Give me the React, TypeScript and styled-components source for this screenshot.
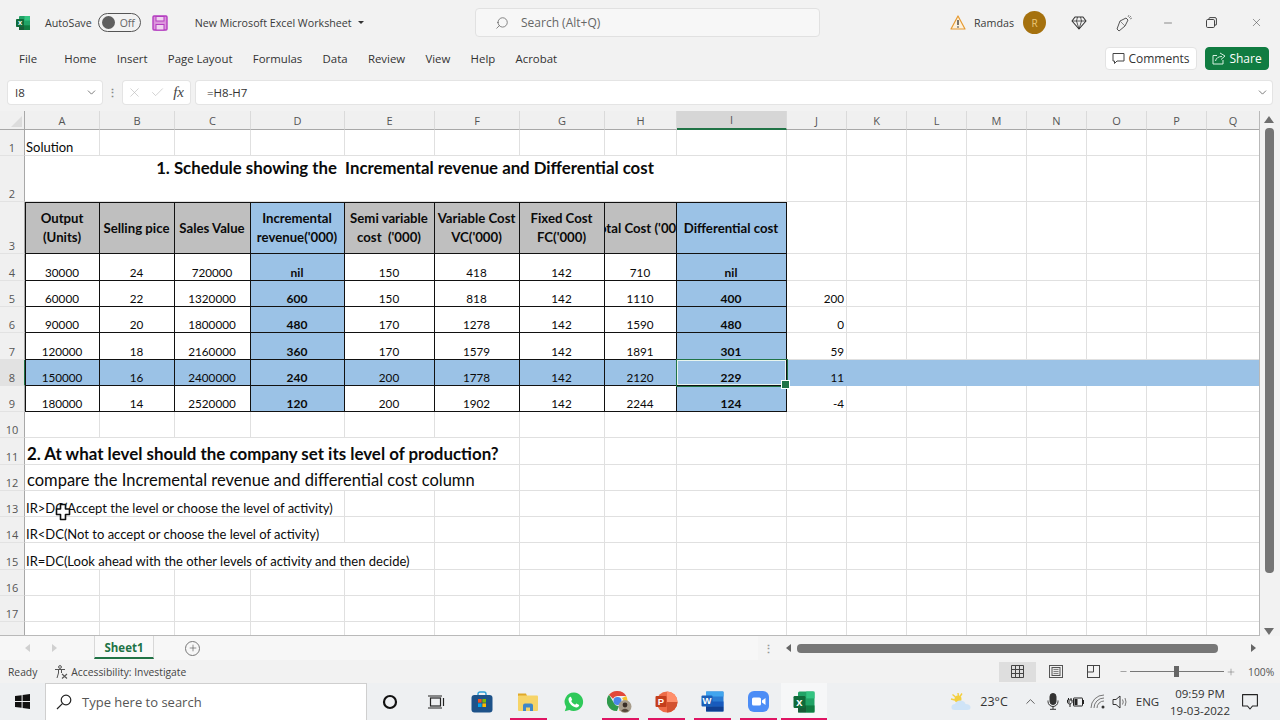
import React from 'react';
import styled, { createGlobalStyle } from 'styled-components';
import { Check, ChevronDown, ChevronUp, Minus, Plus, Search, X } from 'lucide-react';

const UI = `'Open Sans', 'Noto Sans', 'Liberation Sans', sans-serif`;
const SHEET = `Lato, 'Open Sans', 'Liberation Sans', sans-serif`;
const GREEN = '#217346';
const BLUE = '#9bc2e6';
const GRAY = '#bfbfbf';

const GlobalStyle = createGlobalStyle`
  html, body { margin: 0; padding: 0; background: #f3f3f3; }
  body { width: 1280px; height: 720px; overflow: hidden; font-family: ${UI}; color: #333; }
  * { box-sizing: border-box; }
`;

const Page = styled.div`
  width: 1280px;
  height: 720px;
  display: flex;
  flex-direction: column;
  background: #f2f2f2;
`;

/* title bar */
const TitleBar = styled.div`
  height: 45px;
  display: flex;
  align-items: center;
`;
const TitleLeft = styled.div`
  width: 475px;
  display: flex;
  align-items: center;
  padding-left: 15px;
`;
const TitleText = styled.span<{ $ml?: number }>`
  font-size: 10.7px;
  color: #3a3a3a;
  margin-left: ${({ $ml }) => $ml ?? 0}px;
  white-space: nowrap;
`;
const Toggle = styled.div`
  margin-left: 6px;
  width: 43px;
  height: 19px;
  border: 1px solid #555;
  border-radius: 10px;
  display: flex;
  align-items: center;
  padding-left: 3px;
  gap: 5px;
  font-size: 10.5px;
  color: #666;
`;
const ToggleKnob = styled.div`
  width: 13px;
  height: 13px;
  border-radius: 50%;
  background: #5f5f5f;
`;
const Caret = styled.div`
  margin-left: 6px;
  width: 0;
  height: 0;
  border-left: 3px solid transparent;
  border-right: 3px solid transparent;
  border-top: 3px solid #333;
`;
const SearchBox = styled.div`
  width: 345px;
  height: 29px;
  display: flex;
  align-items: center;
  gap: 12px;
  padding-left: 19px;
  background: #f7f7f7;
  border: 1px solid #e1e1e1;
  border-radius: 4px;
  font-size: 12px;
  color: #666;
`;
const TitleRight = styled.div`
  flex: 1;
  display: flex;
  align-items: center;
  padding-left: 130px;
`;
const Avatar = styled.div`
  margin-left: 9px;
  width: 23px;
  height: 23px;
  border-radius: 50%;
  background: #a5710e;
  color: #ecc878;
  font-size: 10px;
  display: flex;
  align-items: center;
  justify-content: center;
`;
const TitleIcon = styled.div<{ $ml: number }>`
  margin-left: ${({ $ml }) => $ml}px;
  display: flex;
  align-items: center;
  color: #444;
`;

/* menu bar */
const MenuBar = styled.div`
  height: 28px;
  display: flex;
  align-items: center;
  padding: 0 0 1px 19px;
  gap: 20.3px;
  font-size: 11.4px;
  color: #333;
`;
const MenuItem = styled.span<{ $first?: boolean }>`
  margin-right: ${({ $first }) => ($first ? 7 : 0)}px;
`;
const MenuActions = styled.div`
  margin-left: auto;
  padding-right: 11px;
  display: flex;
  gap: 8px;
`;
const CommentsButton = styled.div`
  width: 92px;
  height: 23px;
  background: #fff;
  border: 1px solid #e3e3e3;
  border-radius: 4px;
  display: flex;
  align-items: center;
  justify-content: center;
  gap: 3px;
  font-size: 12px;
  color: #333;
`;
const ShareButton = styled(CommentsButton)`
  width: 64px;
  background: #107c41;
  border-color: #107c41;
  color: #fff;
`;

/* formula bar */
const FormulaBar = styled.div`
  margin-top: 8px;
  height: 23px;
  display: flex;
  align-items: stretch;
  padding: 0 8px;
  font-size: 11.5px;
  color: #333;
`;
const FieldBox = styled.div`
  background: #fff;
  border-radius: 3px;
  box-shadow: 0 0 0 1px #e4e4e4;
  display: flex;
  align-items: center;
`;
const NameBox = styled(FieldBox)`
  width: 94px;
  padding: 0 4px 0 7px;
  justify-content: space-between;
`;
const Dots = styled.div`
  width: 21px;
  color: #888;
  display: flex;
  align-items: center;
  justify-content: center;
  font-size: 11px;
  font-weight: 700;
`;
const FxBox = styled(FieldBox)`
  width: 67px;
  padding: 0 4px;
  justify-content: space-between;
  color: #b8b8b8;
`;
const FxLabel = styled.span`
  font-family: 'Liberation Serif', serif;
  font-style: italic;
  font-size: 15px;
  color: #444;
  padding-right: 2px;
`;
const FormulaInput = styled(FieldBox)`
  flex: 1;
  margin-left: 6px;
  padding: 0 3px 0 11px;
  justify-content: space-between;
`;

/* sheet */
const SheetArea = styled.div`
  margin-top: 7px;
  height: 525px;
  display: flex;
`;
const Grid = styled.div`
  position: relative;
  width: 1260px;
  height: 525px;
  display: grid;
  grid-template-columns: 25px 75px 75px 76px 94px 90px 85px 85px 72px 110px 60px 60px 60px 60px 60px 60px 60px 53px;
  grid-template-rows: 19px 26px 46px 52px 27px 26px 26px 27px 26px 26px 26px 27px 26px 26px 26px 27px 26px 26px 14px;
  overflow: hidden;
  border-right: 1px solid #b9b9b9;
  border-bottom: 1px solid #b9b9b9;
  font-family: ${SHEET};
  background: #fff;
`;
const Corner = styled.div`
  background: #f0f0f0;
  border-right: 1px solid #a8a8a8;
  border-bottom: 1px solid #a8a8a8;
  position: relative;
  &::after {
    content: '';
    position: absolute;
    right: 2px;
    bottom: 2px;
    border-left: 11px solid transparent;
    border-bottom: 11px solid #dcdcdc;
  }
`;
const ColHead = styled.div<{ $active?: boolean }>`
  background: ${({ $active }) => ($active ? '#d6d6d6' : '#f0f0f0')};
  border-bottom: ${({ $active }) => ($active ? `2px solid ${GREEN}` : '1px solid #a8a8a8')};
  border-right: 1px solid #dadada;
  color: #555;
  font-family: ${UI};
  font-size: 11px;
  display: flex;
  align-items: center;
  justify-content: center;
`;
const RowHead = styled.div<{ $active?: boolean }>`
  background: ${({ $active }) => ($active ? '#e2e2e2' : '#f0f0f0')};
  border-right: ${({ $active }) => ($active ? `1px solid ${GREEN}` : '1px solid #a8a8a8')};
  border-bottom: 1px solid #e2e2e2;
  color: #555;
  font-family: ${UI};
  font-size: 11px;
  display: flex;
  align-items: flex-end;
  justify-content: center;
`;

type CellProps = {
  $span?: number;
  $align?: 'left' | 'center' | 'right';
  $valign?: 'start' | 'center' | 'end';
  $bold?: boolean;
  $size?: number;
  $fill?: string;
  $boxed?: boolean;
  $top?: boolean;
  $left?: boolean;
  $flat?: boolean;
  $selected?: boolean;
  $indent?: number;
  $lift?: number;
};
const alignMap = { left: 'flex-start', center: 'center', right: 'flex-end' };

const Cell = styled.div<CellProps>`
  position: relative;
  grid-column: span ${({ $span }) => $span ?? 1};
  display: flex;
  justify-content: ${({ $align }) => alignMap[$align ?? 'left']};
  align-items: ${({ $valign }) => ($valign === 'center' ? 'center' : $valign === 'start' ? 'flex-start' : 'flex-end')};
  padding: 0 2px ${({ $lift }) => $lift ?? 0}px;
  padding-left: ${({ $indent }) => $indent ?? 1}px;
  font-size: ${({ $size }) => $size ?? 11.7}px;
  font-weight: ${({ $bold }) => ($bold ? 700 : 400)};
  color: #0a0a0a;
  white-space: pre;
  overflow: hidden;
  background: ${({ $fill }) => $fill ?? '#fff'};
  border-right: 1px solid ${({ $boxed, $flat, $fill }) => ($boxed ? '#111' : $flat ? $fill : '#e0e0e0')};
  border-bottom: 1px solid ${({ $boxed, $flat, $fill }) => ($boxed ? '#111' : $flat ? $fill : '#e0e0e0')};
  ${({ $top }) => ($top ? 'border-top: 1px solid #111;' : '')}
  ${({ $left }) => ($left ? 'border-left: 1px solid #111;' : '')}
  ${({ $selected }) =>
    $selected
      ? `
    overflow: visible;
    z-index: 2;
    box-shadow: 0 0 0 1px ${GREEN}, inset 0 0 0 1px #e8f5ee;
    &::after {
      content: '';
      position: absolute;
      right: -4px;
      bottom: -4px;
      width: 7px;
      height: 7px;
      background: ${GREEN};
      border: 1px solid #fff;
    }
  `
      : ''}
`;
const HeadText = styled.div`
  text-align: center;
  line-height: 19px;
  flex-shrink: 0;
`;
const TitleCell = styled(Cell)`
  padding-top: 1px;
`;
const CellCursor = styled.svg`
  position: absolute;
  left: 55px;
  top: 392px;
  z-index: 3;
`;

/* vertical scroll */
const VScroll = styled.div`
  width: 20px;
  display: flex;
  flex-direction: column;
  align-items: center;
  padding: 5px 2px 1px 0;
`;
const ArrowUp = styled.div`
  border-left: 5px solid transparent;
  border-right: 5px solid transparent;
  border-bottom: 7px solid #6e6e6e;
`;
const ArrowDown = styled.div`
  margin-top: auto;
  border-left: 5px solid transparent;
  border-right: 5px solid transparent;
  border-top: 7px solid #6e6e6e;
`;
const VThumb = styled.div`
  margin-top: 5px;
  width: 9px;
  height: 445px;
  border-radius: 4px;
  background: #757575;
`;

/* tabs */
const TabBar = styled.div`
  height: 24px;
  display: flex;
  align-items: center;
  background: #f7f7f7;
`;
const TabNav = styled.div`
  width: 94px;
  display: flex;
  align-items: center;
  gap: 22px;
  padding-left: 25px;
`;
const NavLeft = styled.div<{ $color?: string }>`
  border-top: 4px solid transparent;
  border-bottom: 4px solid transparent;
  border-right: 5px solid ${({ $color }) => $color ?? '#d0d0d0'};
`;
const NavRight = styled.div<{ $color?: string }>`
  border-top: 4px solid transparent;
  border-bottom: 4px solid transparent;
  border-left: 5px solid ${({ $color }) => $color ?? '#d0d0d0'};
`;
const SheetTab = styled.div`
  width: 60px;
  height: 23px;
  align-self: flex-start;
  padding-top: 2px;
  background: #f9f9f9;
  border-bottom: 2px solid ${GREEN};
  border-left: 1px solid #d8d8d8;
  border-right: 1px solid #d8d8d8;
  color: ${GREEN};
  font-size: 11.5px;
  font-weight: 700;
  display: flex;
  align-items: center;
  justify-content: center;
`;
const AddSheet = styled.div`
  margin-left: 31px;
  width: 15px;
  height: 15px;
  border: 1.4px solid #777;
  border-radius: 50%;
  color: #555;
  display: flex;
  align-items: center;
  justify-content: center;
`;
const HScrollZone = styled.div`
  margin-left: auto;
  width: 522px;
  height: 24px;
  display: flex;
  align-items: center;
  background: #f4f4f4;
`;
const ZoneDots = styled.div`
  width: 20px;
  margin-right: 8px;
  color: #999;
  font-size: 11px;
  font-weight: 700;
  text-align: center;
`;
const HThumb = styled.div`
  margin: 0 33px 0 6px;
  width: 421px;
  height: 9px;
  border-radius: 4px;
  background: #777;
`;

/* status bar */
const StatusBar = styled.div`
  height: 23px;
  display: flex;
  align-items: center;
  padding-left: 8px;
  font-size: 10.3px;
  color: #444;
`;
const StatusAccess = styled.div`
  margin-left: 17px;
  display: flex;
  align-items: center;
  gap: 3px;
`;
const StatusRight = styled.div`
  margin-left: auto;
  display: flex;
  align-items: center;
  padding-right: 8px;
`;
const ViewButton = styled.div<{ $active?: boolean }>`
  width: 37px;
  height: 20px;
  margin-right: 1px;
  background: ${({ $active }) => ($active ? '#dedede' : 'transparent')};
  display: flex;
  align-items: center;
  justify-content: center;
  color: #555;
`;
const ZoomGroup = styled.div`
  margin-left: 6px;
  display: flex;
  align-items: center;
  color: #666;
`;
const SliderTrack = styled.div`
  position: relative;
  margin: 0 2px;
  width: 94px;
  height: 1px;
  background: #777;
`;
const SliderThumb = styled.div`
  position: absolute;
  left: 44px;
  top: -5px;
  width: 5px;
  height: 11px;
  background: #666;
`;
const ZoomValue = styled.span`
  margin-left: 12px;
  width: 24px;
  font-size: 10.3px;
  color: #555;
  white-space: nowrap;
`;

/* taskbar */
const Taskbar = styled.div`
  height: 37px;
  display: flex;
  align-items: stretch;
  background: #eef0f2;
`;
const StartButton = styled.div`
  width: 45px;
  display: flex;
  align-items: center;
  justify-content: center;
  padding-right: 1px;
`;
const TaskSearch = styled.div`
  width: 322px;
  background: #fff;
  border: 1px solid #cfcfcf;
  border-bottom: none;
  display: flex;
  align-items: center;
  gap: 10px;
  padding: 0 0 1px 10px;
  font-size: 13px;
  color: #555;
`;
const TaskSlot = styled.div<{ $run?: boolean; $active?: boolean }>`
  position: relative;
  width: 46px;
  display: flex;
  align-items: center;
  justify-content: center;
  background: ${({ $active }) => ($active ? '#f6f7f8' : 'transparent')};
  ${({ $run, $active }) =>
    $run
      ? `&::after {
    content: '';
    position: absolute;
    left: ${$active ? 0 : 5}px;
    right: ${$active ? 0 : 4}px;
    bottom: 0;
    height: 2px;
    background: #df1463;
  }`
      : ''}
`;
const Tray = styled.div`
  margin-left: auto;
  display: flex;
  align-items: center;
  padding-right: 15px;
  font-size: 12.5px;
  color: #333;
`;
const TrayItem = styled.div<{ $w: number; $pl?: number }>`
  width: ${({ $w }) => $w}px;
  padding-left: ${({ $pl }) => $pl ?? 0}px;
  display: flex;
  align-items: center;
  justify-content: center;
  white-space: nowrap;
`;
const EngLabel = styled(TrayItem)`
  font-size: 11.5px;
`;
const Clock = styled(TrayItem)`
  flex-direction: column;
  font-size: 11.5px;
  line-height: 17px;
`;

/* icons */
const ExcelIcon = ({ size = 16 }: { size?: number }) => (
  <svg width={size} height={size} viewBox="0 0 16 16">
    <rect x="4" y="1" width="11" height="14" rx="1" fill="#21a366" />
    <rect x="9.5" y="1" width="5.5" height="4.6" fill="#33c481" />
    <rect x="9.5" y="10.3" width="5.5" height="4.7" fill="#107c41" />
    <rect x="4" y="10.3" width="5.5" height="4.7" fill="#185c37" />
    <rect x="1" y="4" width="8" height="8" rx="0.8" fill="#0f6b3a" />
    <text x="5" y="10.4" fill="#fff" fontSize="7.5" fontWeight="700" textAnchor="middle" fontFamily="'Liberation Sans', sans-serif">
      x
    </text>
  </svg>
);

const SaveIcon = () => (
  <svg width="16" height="16" viewBox="0 0 16 16">
    <rect x="1" y="1" width="14" height="14" rx="1" fill="#dc96dc" stroke="#b43cc0" strokeWidth="1.4" />
    <rect x="4" y="1.5" width="8" height="4.5" fill="#f0d4f0" stroke="#b43cc0" />
    <rect x="4" y="9.5" width="8" height="5.5" fill="#f0d4f0" stroke="#b43cc0" />
  </svg>
);

const WarnIcon = () => (
  <svg width="16" height="15" viewBox="0 0 16 15">
    <path d="M8 1 L15 14 H1 Z" fill="#fdf1dc" stroke="#e69a32" strokeWidth="1.2" strokeLinejoin="round" />
    <path d="M8 5 V10" stroke="#333" strokeWidth="1.3" />
    <circle cx="8" cy="12" r="0.8" fill="#333" />
  </svg>
);

const DiamondIcon = () => (
  <svg width="16" height="14" viewBox="0 0 16 14" fill="none" stroke="#333" strokeWidth="1.1" strokeLinejoin="round">
    <path d="M4 1 H12 L15 5 L8 13 L1 5 Z" />
    <path d="M1 5 H15 M5.5 5 L8 13 L10.5 5 M5.5 5 L6.5 1 M10.5 5 L9.5 1" strokeWidth="0.8" />
  </svg>
);

const PenIcon = () => (
  <svg width="18" height="18" viewBox="0 0 18 18" fill="none" stroke="#555" strokeWidth="1" strokeLinejoin="round">
    <path d="M2 15 L5 7 L11 4 L13 6 L10 12 L4 17 Z" />
    <path d="M5 7 L10 12 M13 3 L14 1 M15 5 L17 4 M14 4 L16 2" stroke="#8a8a8a" />
  </svg>
);

const RestoreIcon = () => (
  <svg width="11" height="11" viewBox="0 0 11 11" fill="none" stroke="#444" strokeWidth="1">
    <rect x="0.5" y="2.5" width="8" height="8" rx="1.2" />
    <path d="M3 2.5 V1.6 A1 1 0 0 1 4 0.6 H9 A1.4 1.4 0 0 1 10.4 2 V7 A1 1 0 0 1 9 8" />
  </svg>
);

const CommentIcon = ({ color = '#444' }: { color?: string }) => (
  <svg width="13" height="13" viewBox="0 0 13 13" fill="none" stroke={color} strokeWidth="1">
    <path d="M1 1.5 H12 V9 H5 L2.5 11.5 V9 H1 Z" strokeLinejoin="round" />
  </svg>
);

const ShareIcon = () => (
  <svg width="14" height="13" viewBox="0 0 14 13" fill="none" stroke="#d6f0e1" strokeWidth="1">
    <path d="M5 3.5 H1 V12 H11 V8" />
    <path d="M3.5 9 C4 6 6.5 4.5 10 4.5 M8 1 L13 4 L9 7.5" />
  </svg>
);

const AccessIcon = () => (
  <svg width="14" height="14" viewBox="0 0 14 14" fill="none" stroke="#555" strokeWidth="1">
    <circle cx="6" cy="2" r="1.4" />
    <path d="M1 4.5 H11 M4.5 4.5 V8 L3 13 M7.5 4.5 V8" />
    <path d="M8 9 L13 13.5 M13 9 L8 13.5" strokeWidth="1.1" />
  </svg>
);

const NormalViewIcon = () => (
  <svg width="13" height="13" viewBox="0 0 13 13" fill="none" stroke="#444" strokeWidth="1">
    <path d="M0.5 0.5 H12.5 V12.5 H0.5 Z M4.5 0.5 V12.5 M8.5 0.5 V12.5 M0.5 4.5 H12.5 M0.5 8.5 H12.5" />
  </svg>
);

const PageViewIcon = () => (
  <svg width="14" height="13" viewBox="0 0 14 13" fill="none" stroke="#555" strokeWidth="1">
    <rect x="0.5" y="0.5" width="13" height="12" />
    <rect x="3" y="2.5" width="8" height="8" fill="#e8e8e8" />
    <path d="M4.5 4.5 H9.5 M4.5 6.5 H9.5 M4.5 8.5 H9.5" strokeWidth="0.7" />
  </svg>
);

const BreakViewIcon = () => (
  <svg width="13" height="13" viewBox="0 0 13 13" fill="none" stroke="#444" strokeWidth="1">
    <rect x="0.5" y="0.5" width="12" height="12" />
    <path d="M6.5 0.5 V7 H0.5" />
  </svg>
);

const WindowsIcon = () => (
  <svg width="15" height="15" viewBox="0 0 15 15" fill="#111">
    <path d="M0 2.1 L6.6 1.2 V7 H0 Z M7.6 1 L15 0 V7 H7.6 Z M0 8 H6.6 V13.8 L0 12.9 Z M7.6 8 H15 V15 L7.6 14 Z" />
  </svg>
);

const TaskSearchIcon = () => (
  <svg width="16" height="16" viewBox="0 0 16 16" fill="none" stroke="#222" strokeWidth="1.2">
    <circle cx="10" cy="6" r="4.8" />
    <path d="M6.4 9.6 L1 15" />
  </svg>
);

const CortanaRing = () => (
  <svg width="16" height="16" viewBox="0 0 16 16" fill="none" stroke="#111" strokeWidth="2.2">
    <circle cx="8" cy="8" r="6" />
  </svg>
);

const TaskViewIcon = () => (
  <svg width="18" height="14" viewBox="0 0 18 14" fill="none" stroke="#222" strokeWidth="1.2">
    <rect x="3.5" y="3" width="10" height="8" />
    <path d="M1 1 H15 M1 13 H15 M16.5 3 V11" />
  </svg>
);

const StoreIcon = () => (
  <svg width="22" height="22" viewBox="0 0 22 22">
    <path d="M7 5 V3 A2 2 0 0 1 9 1 H13 A2 2 0 0 1 15 3 V5" fill="none" stroke="#2d9fd8" strokeWidth="1.4" />
    <rect x="0.5" y="4" width="21" height="17.5" rx="3" fill="#1d5289" />
    <rect x="7" y="8" width="3.6" height="3.6" fill="#f25022" />
    <rect x="11.4" y="8" width="3.6" height="3.6" fill="#7fba00" />
    <rect x="7" y="12.4" width="3.6" height="3.6" fill="#00a4ef" />
    <rect x="11.4" y="12.4" width="3.6" height="3.6" fill="#ffb900" />
  </svg>
);

const FolderIcon = () => (
  <svg width="22" height="20" viewBox="0 0 22 20">
    <path d="M1 1.5 H9 L10 4 H1 Z" fill="#e0a92a" />
    <rect x="1" y="3.5" width="20" height="15.5" rx="1" fill="#f6d468" />
    <path d="M6 13.5 Q6 11.5 8 11.5 H14 Q16 11.5 16 13.5 V19 H13 V15.5 H9 V19 H6 Z" fill="#3f87c9" />
  </svg>
);

const WhatsAppIcon = () => (
  <svg width="20" height="20" viewBox="0 0 20 20">
    <path d="M10 0.5 A9.3 9.3 0 1 1 5.4 18 L0.8 19.3 L2.2 15 A9.3 9.3 0 0 1 10 0.5 Z" fill="#2fc95a" />
    <path
      d="M6.9 4.8 L8.2 7.8 L7.2 9 C8 10.6 9.4 12 11.1 12.8 L12.3 11.6 L15.2 13 C15.1 14.6 13.6 15.6 12.1 15.4 C8.3 14.8 4.9 11.3 4.5 7.7 C4.4 6.2 5.4 4.9 6.9 4.8 Z"
      fill="#fff"
    />
  </svg>
);

const ChromeIcon = () => (
  <svg width="26" height="24" viewBox="0 0 26 24">
    <path d="M10.5 1 A10 10 0 0 1 19.2 6 H10.5 A5 5 0 0 0 6 8.8 L2 4.8 A10 10 0 0 1 10.5 1 Z" fill="#e2483a" />
    <path d="M19.2 6 A10 10 0 0 1 12 20.9 L15 15 A5 5 0 0 0 15 8 Z" fill="#f5c22e" />
    <path d="M2 4.8 L7 13 A5 5 0 0 0 12 16 L10 21 A10 10 0 0 1 2 4.8 Z" fill="#2f9a4c" />
    <circle cx="10.5" cy="11" r="4" fill="#4a86e8" />
    <circle cx="18" cy="16.5" r="6.5" fill="#a79d8c" />
    <circle cx="18" cy="15" r="2.4" fill="#3a2f28" />
    <path d="M14 21 Q18 16.5 22 21 Q18 23 14 21 Z" fill="#57493c" />
  </svg>
);

const PowerPointIcon = () => (
  <svg width="23" height="22" viewBox="0 0 23 22">
    <circle cx="12" cy="11" r="10.5" fill="#ed6c47" />
    <path d="M12 .5 A10.5 10.5 0 0 1 22.5 11 H12 Z" fill="#ff8f6b" />
    <path d="M12 11 H22.5 A10.5 10.5 0 0 1 12 21.5 Z" fill="#d35230" />
    <rect x="0.5" y="5" width="11" height="11" rx="1" fill="#c43e1c" />
    <text x="6" y="13.8" fill="#fff" fontSize="9.5" fontWeight="700" textAnchor="middle" fontFamily="'Liberation Sans', sans-serif">
      P
    </text>
  </svg>
);

const WordIcon = () => (
  <svg width="23" height="21" viewBox="0 0 23 21">
    <rect x="5" y="0.5" width="17.5" height="20" rx="1" fill="#2b7cd3" />
    <rect x="5" y="0.5" width="17.5" height="5" fill="#41a5ee" />
    <rect x="5" y="10.5" width="17.5" height="5" fill="#185abd" />
    <rect x="5" y="15.5" width="17.5" height="5" fill="#103f91" />
    <rect x="0.5" y="4.5" width="11" height="11" rx="1" fill="#1a5fb8" />
    <text x="6" y="13.4" fill="#fff" fontSize="9.5" fontWeight="700" textAnchor="middle" fontFamily="'Liberation Sans', sans-serif">
      W
    </text>
  </svg>
);

const ZoomAppIcon = () => (
  <svg width="21" height="21" viewBox="0 0 21 21">
    <rect x="0" y="0" width="21" height="21" rx="6" fill="#4c8df6" />
    <rect x="4" y="6.5" width="9" height="8" rx="1.6" fill="#fff" />
    <path d="M14 9.5 L17.5 7 V14 L14 11.5 Z" fill="#fff" />
  </svg>
);

const WeatherIcon = () => (
  <svg width="22" height="20" viewBox="0 0 22 20">
    <circle cx="8" cy="7" r="3.5" fill="#f3cf3f" />
    <path d="M1 7 L5 8 M8 1 L8.4 4 M2.5 2.5 L5.5 5 M12 1.5 L10 4.5" stroke="#f3cf3f" strokeWidth="1.4" />
    <path d="M5 18 Q1 18 1.5 14.5 Q2 12 5 12 Q6.5 8 11 8.5 Q15 9 15.5 12 Q20.5 12 20.5 15.5 Q20.5 18 17 18 Z" fill="#cfe4f7" />
  </svg>
);

const MicIcon = () => (
  <svg width="12" height="17" viewBox="0 0 12 17" fill="none" stroke="#333" strokeWidth="1">
    <rect x="3" y="0.5" width="6" height="11" rx="3" fill="#333" />
    <path d="M1 7.5 V8.5 A5 5 0 0 0 11 8.5 V7.5 M6 13.5 V16 M3 16.3 H9" />
  </svg>
);

const PowerIcon = () => (
  <svg width="17" height="12" viewBox="0 0 17 12" fill="none" stroke="#222" strokeWidth="1">
    <rect x="6.5" y="2" width="9" height="8" rx="0.5" />
    <rect x="7.5" y="3" width="3" height="6" fill="#222" stroke="none" />
    <rect x="15.5" y="4.5" width="1" height="3" fill="#222" />
    <path d="M0.5 6 H3 M1.5 2 V4 M4 2 V4 M0.5 4 H5 V6.5 Q4 8 2.8 8 Q1 8 0.5 6.5 Z M3 8 V11" />
  </svg>
);

const WifiIcon = () => (
  <svg width="16" height="15" viewBox="0 0 16 15" fill="none" stroke="#777" strokeWidth="1">
    <path d="M1 14 A13 13 0 0 1 14 1 M4 14 A10 10 0 0 1 14 4 M7 14 A7 7 0 0 1 14 7" />
    <circle cx="13" cy="13" r="1.5" fill="#333" stroke="none" />
  </svg>
);

const VolumeIcon = () => (
  <svg width="16" height="14" viewBox="0 0 16 14" fill="none" stroke="#333" strokeWidth="1">
    <path d="M1 4.5 H4 L8 1 V13 L4 9.5 H1 Z" strokeLinejoin="round" />
    <path d="M10.5 4.5 Q12 7 10.5 9.5 M13 3 Q15 7 13 11" stroke="#777" />
  </svg>
);

const NotifyIcon = () => (
  <svg width="16" height="16" viewBox="0 0 16 16" fill="none" stroke="#222" strokeWidth="1.1">
    <path d="M0.6 0.6 H15.4 V12 H10.5 L8 15 L5.5 12 H0.6 Z" strokeLinejoin="round" />
  </svg>
);

/* sheet data */
const COLUMNS = ['A', 'B', 'C', 'D', 'E', 'F', 'G', 'H', 'I', 'J', 'K', 'L', 'M', 'N', 'O', 'P', 'Q'];
const HEADERS = [
  'Output\n(Units)',
  'Selling pice',
  'Sales Value',
  'Incremental\nrevenue(\'000)',
  'Semi variable\ncost  (\'000)',
  'Variable Cost\nVC(\'000)',
  'Fixed Cost\nFC(\'000)',
  'Total Cost (\'000)',
  'Differential cost',
];
const ROWS = [
  ['30000', '24', '720000', 'nil', '150', '418', '142', '710', 'nil', ''],
  ['60000', '22', '1320000', '600', '150', '818', '142', '1110', '400', '200'],
  ['90000', '20', '1800000', '480', '170', '1278', '142', '1590', '480', '0'],
  ['120000', '18', '2160000', '360', '170', '1579', '142', '1891', '301', '59'],
  ['150000', '16', '2400000', '240', '200', '1778', '142', '2120', '229', '11'],
  ['180000', '14', '2520000', '120', '200', '1902', '142', '2244', '124', '-4'],
];
const isBlueCol = (i: number) => i === 3 || i === 8;

const blanks = (n: number, row: number) =>
  Array.from({ length: n }, (_, i) => <Cell key={`b${row}-${i}`} />);

const TextRow = ({
  num,
  label,
  span,
  text,
  bold,
  size = 13,
  indent,
}: {
  num: number;
  label?: string;
  span: number;
  text: string;
  bold?: boolean;
  size?: number;
  indent?: number;
}) => (
  <>
    <RowHead>{label ?? num}</RowHead>
    <Cell $span={span} $bold={bold} $size={size} $indent={indent}>
      {text}
    </Cell>
    {blanks(17 - span, num)}
  </>
);

const Sheet = () => (
  <Grid>
    <Corner />
    {COLUMNS.map((c) => (
      <ColHead key={c} $active={c === 'I'}>
        {c}
      </ColHead>
    ))}

    <TextRow num={1} span={1} text="Solution" />

    <RowHead>2</RowHead>
    <TitleCell $span={9} $align="center" $valign="start" $bold $size={16.8}>
      1. Schedule showing the  Incremental revenue and Differential cost
    </TitleCell>
    {blanks(8, 2)}

    <RowHead>3</RowHead>
    {HEADERS.map((h, i) => (
      <Cell
        key={h}
        $align="center"
        $valign="center"
        $bold
        $boxed
        $top
        $left={i === 0}
        $size={13.2}
        $fill={isBlueCol(i) ? BLUE : GRAY}
      >
        <HeadText>{h}</HeadText>
      </Cell>
    ))}
    {blanks(8, 3)}

    {ROWS.map((row, r) => {
      const num = r + 4;
      const active = num === 8;
      return (
        <React.Fragment key={num}>
          <RowHead $active={active}>{num}</RowHead>
          {row.slice(0, 9).map((v, i) => (
            <Cell
              key={i}
              $align="center"
              $boxed
              $left={i === 0}
              $bold={isBlueCol(i)}
              $size={isBlueCol(i) ? 12 : 11.7}
              $lift={isBlueCol(i) ? 0 : 1}
              $fill={active || isBlueCol(i) ? BLUE : '#fff'}
              $selected={active && i === 8}
            >
              {v}
            </Cell>
          ))}
          <Cell $align="right" $lift={1} $fill={active ? BLUE : '#fff'} $flat={active}>
            {row[9]}
          </Cell>
          {Array.from({ length: 7 }, (_, i) => (
            <Cell key={`e${i}`} $fill={active ? BLUE : '#fff'} $flat={active} />
          ))}
        </React.Fragment>
      );
    })}

    <TextRow num={10} span={1} text="" />
    <TextRow num={11} span={6} text="2. At what level should the company set its level of production?" bold size={16.9} indent={2} />
    <TextRow num={12} span={6} text="compare the Incremental revenue and differential cost column" size={16.5} indent={2} />
    <TextRow num={13} span={4} text="IR>DC(Accept the level or choose the level of activity)" />
    <TextRow num={14} span={4} text="IR<DC(Not to accept or choose the level of activity)" />
    <TextRow num={15} span={5} text="IR=DC(Look ahead with the other levels of activity and then decide)" />
    <TextRow num={16} span={1} text="" />
    <TextRow num={17} span={1} text="" />
    <TextRow num={18} label="" span={1} text="" />

    <CellCursor width="16" height="18" viewBox="0 0 16 18">
      <path
        d="M5.5 1.5 H10.5 V6 H14.5 V11.5 H10.5 V16.5 H5.5 V11.5 H1.5 V6 H5.5 Z"
        fill="#fff"
        stroke="#111"
        strokeWidth="1.6"
        strokeLinejoin="round"
      />
    </CellCursor>
  </Grid>
);

export default function App() {
  return (
    <>
      <GlobalStyle />
      <Page>
        <TitleBar>
          <TitleLeft>
            <ExcelIcon />
            <TitleText $ml={14}>AutoSave</TitleText>
            <Toggle>
              <ToggleKnob />
              Off
            </Toggle>
            <TitleIcon $ml={11}>
              <SaveIcon />
            </TitleIcon>
            <TitleText $ml={27}>New Microsoft Excel Worksheet</TitleText>
            <Caret />
          </TitleLeft>
          <SearchBox>
            <Search size={14} strokeWidth={1.2} color="#555" style={{ transform: 'scaleX(-1)' }} />
            Search (Alt+Q)
          </SearchBox>
          <TitleRight>
            <WarnIcon />
            <TitleText $ml={8}>Ramdas</TitleText>
            <Avatar>R</Avatar>
            <TitleIcon $ml={25}>
              <DiamondIcon />
            </TitleIcon>
            <TitleIcon $ml={28}>
              <PenIcon />
            </TitleIcon>
            <TitleIcon $ml={29}>
              <Minus size={12} strokeWidth={1.2} />
            </TitleIcon>
            <TitleIcon $ml={32}>
              <RestoreIcon />
            </TitleIcon>
            <TitleIcon $ml={33}>
              <X size={13} strokeWidth={1} />
            </TitleIcon>
          </TitleRight>
        </TitleBar>

        <MenuBar>
          <MenuItem $first>File</MenuItem>
          <MenuItem>Home</MenuItem>
          <MenuItem>Insert</MenuItem>
          <MenuItem>Page Layout</MenuItem>
          <MenuItem>Formulas</MenuItem>
          <MenuItem>Data</MenuItem>
          <MenuItem>Review</MenuItem>
          <MenuItem>View</MenuItem>
          <MenuItem>Help</MenuItem>
          <MenuItem>Acrobat</MenuItem>
          <MenuActions>
            <CommentsButton>
              <CommentIcon />
              Comments
            </CommentsButton>
            <ShareButton>
              <ShareIcon />
              Share
            </ShareButton>
          </MenuActions>
        </MenuBar>

        <FormulaBar>
          <NameBox>
            I8
            <ChevronDown size={13} strokeWidth={1.4} color="#555" />
          </NameBox>
          <Dots>⋮</Dots>
          <FxBox>
            <X size={15} strokeWidth={1} />
            <Check size={15} strokeWidth={1} />
            <FxLabel>fx</FxLabel>
          </FxBox>
          <FormulaInput>
            =H8-H7
            <ChevronDown size={13} strokeWidth={1.4} color="#555" />
          </FormulaInput>
        </FormulaBar>

        <SheetArea>
          <Sheet />
          <VScroll>
            <ArrowUp />
            <VThumb />
            <ArrowDown />
          </VScroll>
        </SheetArea>

        <TabBar>
          <TabNav>
            <NavLeft />
            <NavRight />
          </TabNav>
          <SheetTab>Sheet1</SheetTab>
          <AddSheet>
            <Plus size={10} strokeWidth={1.5} />
          </AddSheet>
          <HScrollZone>
            <ZoneDots>⋮</ZoneDots>
            <NavLeft $color="#666" />
            <HThumb />
            <NavRight $color="#666" />
          </HScrollZone>
        </TabBar>

        <StatusBar>
          Ready
          <StatusAccess>
            <AccessIcon />
            Accessibility: Investigate
          </StatusAccess>
          <StatusRight>
            <ViewButton $active>
              <NormalViewIcon />
            </ViewButton>
            <ViewButton>
              <PageViewIcon />
            </ViewButton>
            <ViewButton>
              <BreakViewIcon />
            </ViewButton>
            <ZoomGroup>
              <Minus size={9} strokeWidth={1.5} />
              <SliderTrack>
                <SliderThumb />
              </SliderTrack>
              <Plus size={10} strokeWidth={1.2} />
            </ZoomGroup>
            <ZoomValue>100%</ZoomValue>
          </StatusRight>
        </StatusBar>

        <Taskbar>
          <StartButton>
            <WindowsIcon />
          </StartButton>
          <TaskSearch>
            <TaskSearchIcon />
            Type here to search
          </TaskSearch>
          <TaskSlot>
            <CortanaRing />
          </TaskSlot>
          <TaskSlot>
            <TaskViewIcon />
          </TaskSlot>
          <TaskSlot>
            <StoreIcon />
          </TaskSlot>
          <TaskSlot $run>
            <FolderIcon />
          </TaskSlot>
          <TaskSlot>
            <WhatsAppIcon />
          </TaskSlot>
          <TaskSlot $run>
            <ChromeIcon />
          </TaskSlot>
          <TaskSlot $run>
            <PowerPointIcon />
          </TaskSlot>
          <TaskSlot $run>
            <WordIcon />
          </TaskSlot>
          <TaskSlot $run>
            <ZoomAppIcon />
          </TaskSlot>
          <TaskSlot $run $active>
            <ExcelIcon size={24} />
          </TaskSlot>
          <Tray>
            <TrayItem $w={31}>
              <WeatherIcon />
            </TrayItem>
            <TrayItem $w={36}>23°C</TrayItem>
            <TrayItem $w={30} $pl={6}>
              <ChevronUp size={15} strokeWidth={1.2} />
            </TrayItem>
            <TrayItem $w={22}>
              <MicIcon />
            </TrayItem>
            <TrayItem $w={22}>
              <PowerIcon />
            </TrayItem>
            <TrayItem $w={24}>
              <WifiIcon />
            </TrayItem>
            <TrayItem $w={20}>
              <VolumeIcon />
            </TrayItem>
            <EngLabel $w={35}>ENG</EngLabel>
            <Clock $w={70}>
              <span>09:59 PM</span>
              <span>19-03-2022</span>
            </Clock>
            <TrayItem $w={30}>
              <NotifyIcon />
            </TrayItem>
          </Tray>
        </Taskbar>
      </Page>
    </>
  );
}
